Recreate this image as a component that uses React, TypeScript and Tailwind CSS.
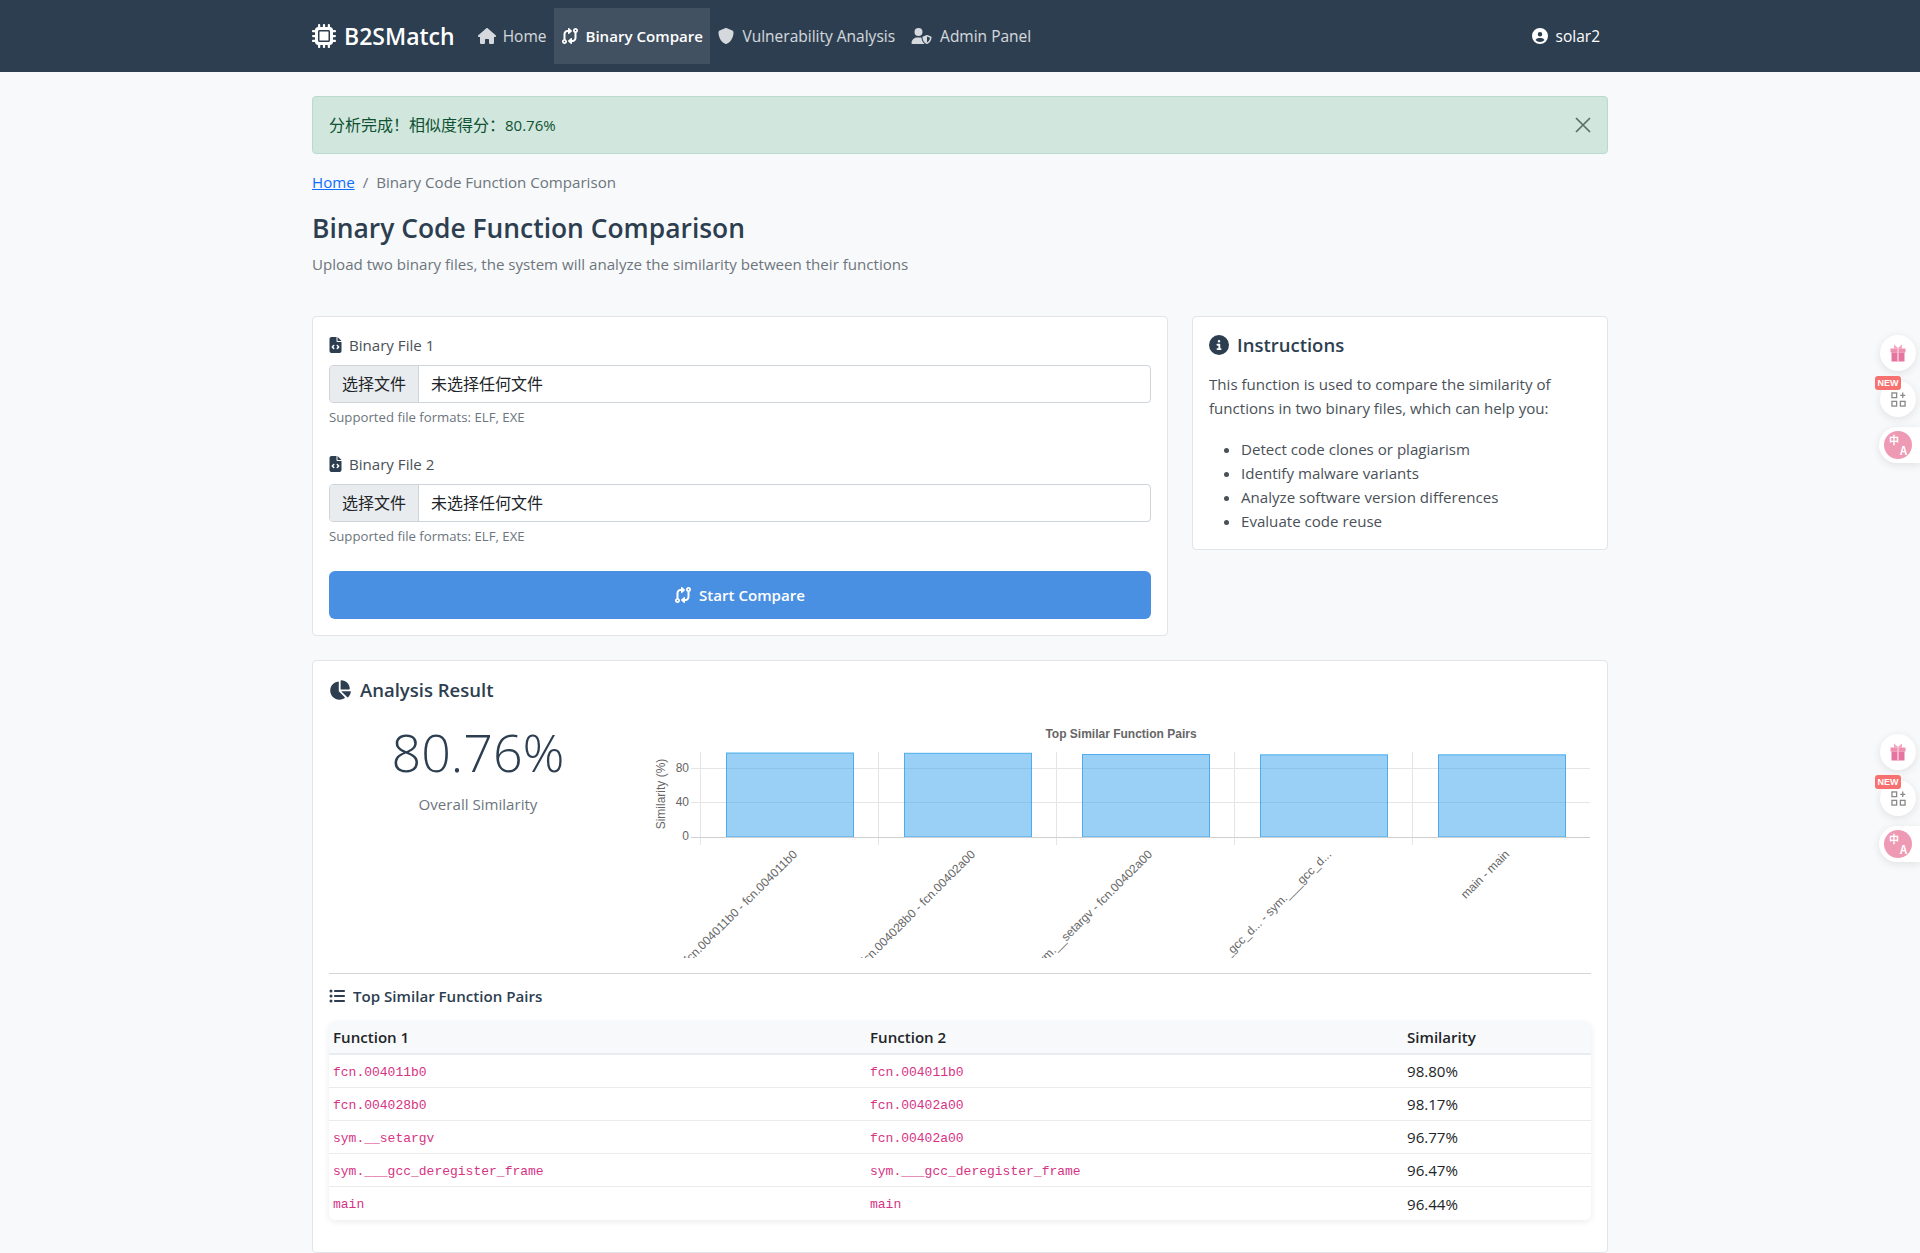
import { FaChartPie, FaCircleInfo, FaCircleUser, FaCodeCompare, FaFileCode, FaHouse, FaListUl, FaMicrochip, FaShield, FaUserShield } from 'react-icons/fa6'

const pairs = [
  { a: 'fcn.004011b0', b: 'fcn.004011b0', score: '98.80%' },
  { a: 'fcn.004028b0', b: 'fcn.00402a00', score: '98.17%' },
  { a: 'sym.__setargv', b: 'fcn.00402a00', score: '96.77%' },
  { a: 'sym.___gcc_deregister_frame', b: 'sym.___gcc_deregister_frame', score: '96.47%' },
  { a: 'main', b: 'main', score: '96.44%' },
]

const bars = [
  { x: 727, top: 753, label: 'fcn.004011b0 - fcn.004011b0', lx: 799 },
  { x: 905, top: 753.3, label: 'fcn.004028b0 - fcn.00402a00', lx: 977 },
  { x: 1083, top: 754.5, label: 'sym.__setargv - fcn.00402a00', lx: 1154 },
  { x: 1261, top: 754.8, label: 'sym.___gcc_d... - sym.___gcc_d...', lx: 1333 },
  { x: 1439, top: 754.8, label: 'main - main', lx: 1511 },
]

function Chart() {
  return (
    <svg viewBox="650 720 942 238" className="w-[942px] h-[238px] block" style={{ fontFamily: '"Liberation Sans", Arial, sans-serif' }}>
      <text x="1122" y="738" textAnchor="middle" fontSize="12" fontWeight="700" fill="#666">Top Similar Function Pairs</text>
      {[768.5, 802.5].map((y) => (
        <line key={y} x1="692" x2="1591" y1={y} y2={y} stroke="#e5e5e5" />
      ))}
      {[701.5, 879.5, 1057.5, 1235.5, 1413.5].map((x) => (
        <line key={x} x1={x} x2={x} y1="752" y2="845" stroke="#e5e5e5" />
      ))}
      {bars.map((b) => (
        <rect key={b.x} x={b.x + 0.5} y={b.top} width="127" height={837 - b.top} fill="rgba(54,162,235,0.5)" stroke="rgba(54,162,235,0.85)" />
      ))}
      <line x1="692" x2="1591" y1="837.5" y2="837.5" stroke="#cfcfcf" />
      <text x="690" y="772" textAnchor="end" fontSize="12" fill="#666">80</text>
      <text x="690" y="806" textAnchor="end" fontSize="12" fill="#666">40</text>
      <text x="690" y="840" textAnchor="end" fontSize="12" fill="#666">0</text>
      <text transform="translate(666 794) rotate(-90)" textAnchor="middle" fontSize="12" fill="#666">Similarity (%)</text>
      {bars.map((b) => (
        <text key={b.label} transform={`translate(${b.lx} 855) rotate(-45)`} textAnchor="end" fontSize="12" fill="#666">{b.label}</text>
      ))}
    </svg>
  )
}

function FileField({ label }: { label: string }) {
  return (
    <div className="mb-6">
      <div className="flex items-center h-6 text-[#495057]">
        <FaFileCode className="w-[13px] h-[16px] text-[#2c3e50] mr-[7px]" />
        {label}
      </div>
      <div className="mt-2 flex h-[38px] border border-[#ced4da] rounded-[4px] bg-white overflow-hidden text-[16px] text-[#212529]" style={{ fontFamily: '"Noto Sans CJK SC", sans-serif' }}>
        <div className="w-[89px] pb-[2px] flex items-center justify-center bg-[#e9ecef] border-r border-[#ced4da]">选择文件</div>
        <div className="flex items-center pb-[2px] pl-3">未选择任何文件</div>
      </div>
      <div className="mt-1 text-[13.2px] leading-[21px] text-[#6c757d]">Supported file formats: ELF, EXE</div>
    </div>
  )
}

function Widgets({ top }: { top: string }) {
  return (
    <div className={`absolute right-0 ${top} w-[50px] h-[128px]`}>
      <div className="absolute right-[4px] top-0 w-9 h-9 rounded-full bg-white shadow-[0_2px_8px_rgba(0,0,0,0.1)] flex items-center justify-center">
        <svg viewBox="0 0 16 18" className="w-[16px] h-[18px]">
          <path d="M4 0.5l4 3.5 4-3.5v4H4z" fill="#f3a6c0" />
          <rect x="0.5" y="4.5" width="15" height="4" fill="#ee8fb0" />
          <rect x="1.5" y="8.5" width="13" height="9" fill="#e574a0" />
          <rect x="7.2" y="4.5" width="1.6" height="13" fill="#f9c6d8" />
        </svg>
      </div>
      <div className="absolute right-[4px] top-[46px] w-9 h-9 rounded-full bg-white shadow-[0_2px_8px_rgba(0,0,0,0.1)] flex items-center justify-center">
        <svg viewBox="0 0 16 16" className="w-[15px] h-[15px]" fill="none" stroke="#8a8a8a" strokeWidth="1.4">
          <rect x="1" y="1" width="5" height="5" />
          <rect x="1" y="10" width="5" height="5" />
          <rect x="10" y="10" width="5" height="5" />
          <path d="M12.5 0.5v6M9.8 3.5h5.4" />
        </svg>
      </div>
      <div className="absolute left-[5px] top-[41px] w-[26px] h-[14px] rounded-[3px] bg-[#f87171] text-white text-[9px] font-bold leading-[14px] text-center" style={{ fontFamily: '"Liberation Sans", sans-serif' }}>NEW</div>
      <div className="absolute left-[9px] right-0 top-[92px] h-9 rounded-l-full bg-white shadow-[0_2px_8px_rgba(0,0,0,0.1)] flex items-center pl-[5px]">
        <div className="relative w-[28px] h-[28px] rounded-full bg-[#ee9ab5] text-white font-bold" style={{ fontFamily: '"Noto Sans CJK SC", sans-serif' }}>
          <span className="absolute left-[5px] top-[3px] text-[10px] leading-[11px]">中</span>
          <span className="absolute right-[5px] bottom-[3px] text-[11px] leading-[12px]">A</span>
        </div>
      </div>
    </div>
  )
}

export default function App() {
  return (
    <div className="relative h-[1253px] overflow-hidden bg-[#f8f9fa] text-[15.1px] leading-6 text-[#2c3e50]" style={{ fontFamily: '"Open Sans", "Noto Sans CJK SC", sans-serif' }}>
      <nav className="h-[72px] bg-[#2c3e50]">
        <div className="w-[1296px] mx-auto h-full flex items-center text-[15.5px]">
          <div className="flex items-center text-white font-semibold text-[23px] mr-[14px]">
            <FaMicrochip className="w-[24px] h-[24px] mr-2" />
            B2SMatch
          </div>
          <div className="flex items-center h-[56px] px-2 text-white/80 font-medium">
            <FaHouse className="w-[20px] h-[16px] mr-[6px]" />Home
          </div>
          <div className="flex items-center h-[56px] w-[156px] pl-2 bg-white/10 text-white text-[15.1px] font-semibold">
            <FaCodeCompare className="w-[16px] h-[16px] mr-[7px]" />Binary Compare
          </div>
          <div className="flex items-center h-[56px] px-2 text-white/80 font-medium">
            <FaShield className="w-[16px] h-[16px] mr-[8px]" />Vulnerability Analysis
          </div>
          <div className="flex items-center h-[56px] px-2 text-white/80 font-medium">
            <FaUserShield className="w-[21px] h-[16px] mr-[8px]" />Admin Panel
          </div>
          <div className="ml-auto flex items-center pr-2 text-white font-medium">
            <FaCircleUser className="w-[16px] h-[16px] mr-[8px]" />solar2
          </div>
        </div>
      </nav>

      <main className="w-[1296px] mx-auto">
        <div className="mt-6 h-[58px] flex items-center justify-between px-4 border border-[#badbcc] rounded-[4px] bg-[#d1e7dd] text-[#0f5132]">
          <span className="text-[16px]">分析完成！相似度得分：<span className="text-[15px]">80.76%</span></span>
          <svg viewBox="0 0 16 16" className="w-4 h-4" stroke="#5c6e66" strokeWidth="1.7">
            <path d="M1 1l14 14M15 1L1 15" />
          </svg>
        </div>

        <div className="mt-4 text-[#6c757d]">
          <span className="text-[#0d6efd] underline">Home</span>
          <span className="px-2">/</span>
          Binary Code Function Comparison
        </div>

        <h2 className="mt-[17px] text-[26.4px] leading-[34px] font-semibold">Binary Code Function Comparison</h2>
        <p className="mt-[7px] text-[#6c757d]">Upload two binary files, the system will analyze the similarity between their functions</p>

        <div className="mt-10 flex items-start justify-between">
          <div className="w-[856px] bg-white border border-[#e1e4e8] rounded-[4px] p-4">
            <FileField label="Binary File 1" />
            <FileField label="Binary File 2" />
            <div className="h-[48px] rounded-[6px] bg-[#4a90e2] text-white font-semibold flex items-center justify-center">
              <FaCodeCompare className="w-4 h-4 mr-2" />
              Start Compare
            </div>
          </div>

          <div className="w-[416px] h-[234px] bg-white border border-[#e1e4e8] rounded-[4px] p-4">
            <div className="flex items-center text-[18.5px] font-semibold">
              <FaCircleInfo className="w-5 h-5 mr-2" />
              Instructions
            </div>
            <p className="mt-[15px] text-[#495057]">
              This function is used to compare the similarity of functions in two binary files, which can help you:
            </p>
            <ul className="mt-[17px] pl-[32px] list-disc text-[#495057]">
              <li>Detect code clones or plagiarism</li>
              <li>Identify malware variants</li>
              <li>Analyze software version differences</li>
              <li>Evaluate code reuse</li>
            </ul>
          </div>
        </div>

        <div className="mt-6 h-[593px] bg-white border border-[#e1e4e8] rounded-[4px] px-4 pt-4">
          <div className="flex items-center text-[18.5px] font-semibold h-[26px]">
            <FaChartPie className="w-[22px] h-[22px] mr-[9px]" />
            Analysis Result
          </div>
          <div className="mt-[17px] flex justify-between">
            <div className="w-[298px] text-center">
              <div className="text-[52px] leading-[64px] font-light">80.76%</div>
              <div className="mt-[8px] text-[#6c757d]">Overall Similarity</div>
            </div>
            <Chart />
          </div>
          <div className="mt-[15px] border-t border-[#d4d4d4]" />
          <div className="mt-[10px] flex items-center font-semibold">
            <FaListUl className="w-4 h-4 mr-2" />
            Top Similar Function Pairs
          </div>
          <div className="mt-[13px] rounded-[6px] shadow-[0_2px_6px_rgba(0,0,0,0.08)] overflow-hidden">
            <div className="grid grid-cols-[537px_537px_1fr] h-[34px] items-center bg-[#f8f9fa] border-b-2 border-[#e9ecef] px-1 font-semibold text-[#212529]">
              <div>Function 1</div>
              <div>Function 2</div>
              <div>Similarity</div>
            </div>
            {pairs.map((p, i) => (
              <div key={i} className="grid grid-cols-[537px_537px_1fr] h-[33px] items-center border-b last:border-b-0 border-[#e9ecef] px-1 text-[#212529]">
                <code className="text-[13px] mt-[3px] text-[#d63384]" style={{ fontFamily: '"Liberation Mono", monospace' }}>{p.a}</code>
                <code className="text-[13px] mt-[3px] text-[#d63384]" style={{ fontFamily: '"Liberation Mono", monospace' }}>{p.b}</code>
                <div>{p.score}</div>
              </div>
            ))}
          </div>
        </div>
      </main>

      <Widgets top="top-[335px]" />
      <Widgets top="top-[734px]" />
    </div>
  )
}
